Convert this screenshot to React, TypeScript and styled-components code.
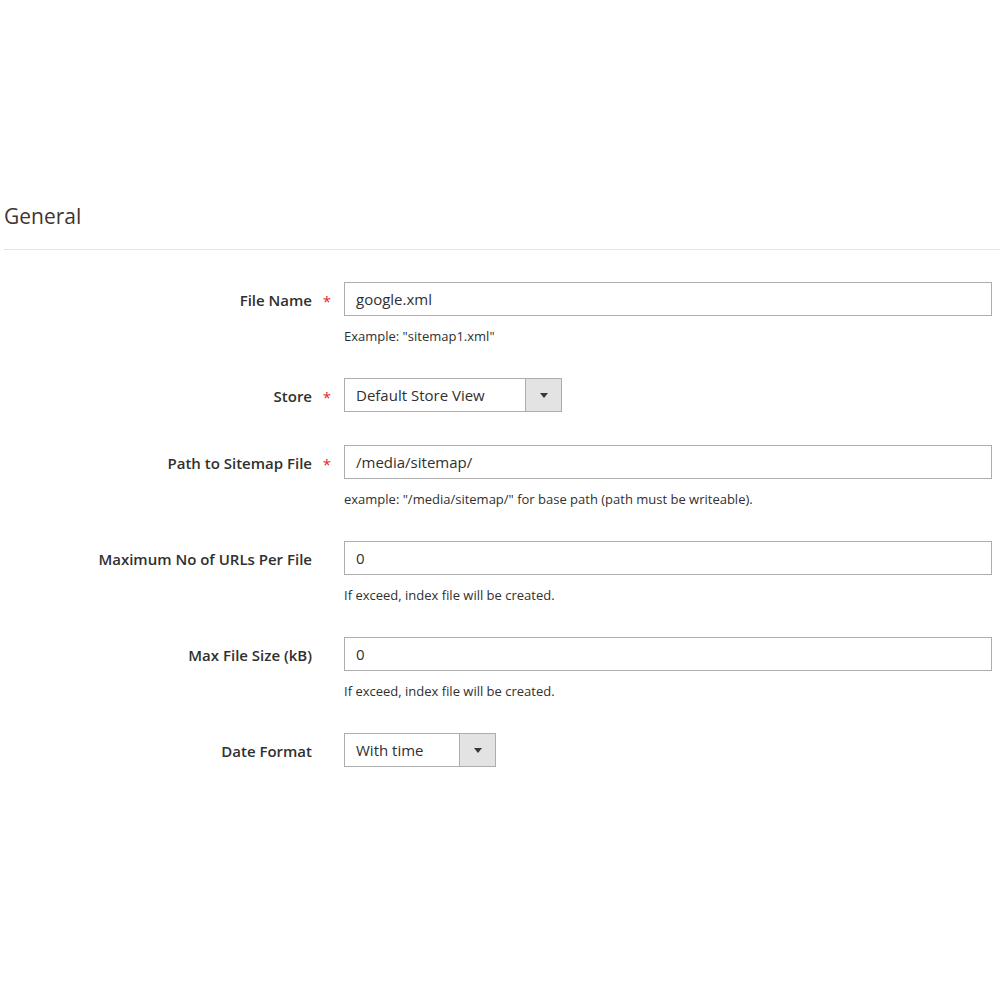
import React from "react";
import styled, { createGlobalStyle } from "styled-components";

const Global = createGlobalStyle`
  html, body { margin: 0; padding: 0; background: #ffffff; }
  body { font-family: "Open Sans", "Liberation Sans", sans-serif; color: #303030; }
`;

const Page = styled.div`
  width: 1000px;
  min-height: 1000px;
  padding-top: 203px;
  box-sizing: border-box;
`;

const Section = styled.section`
  padding-left: 4px;
`;

const Title = styled.h2`
  margin: 0;
  padding: 0 0 20px 0;
  font-size: 21px;
  line-height: 26px;
  font-weight: 400;
  color: #41362f;
  border-bottom: 1px solid #e3e3e3;
`;

const Fields = styled.div`
  display: flex;
  flex-direction: column;
  gap: 33px;
  padding-top: 32px;
`;

const Field = styled.div`
  display: grid;
  grid-template-columns: 308px 32px 648px;
  align-items: start;
`;

const Label = styled.label`
  text-align: right;
  font-size: 15px;
  font-weight: 600;
  color: #303030;
  line-height: 34px;
  padding-top: 1px;
  height: 34px;
  box-sizing: border-box;
  white-space: nowrap;
`;

const Required = styled.span`
  text-align: center;
  color: #e22626;
  font-size: 15px;
  font-weight: 400;
  line-height: 34px;
  height: 34px;
  padding-top: 2px;
  box-sizing: border-box;
  padding-right: 2px;
`;

const Control = styled.div`
  display: flex;
  flex-direction: column;
  align-items: flex-start;
`;

const TextBox = styled.div`
  box-sizing: border-box;
  width: 648px;
  height: 34px;
  border: 1px solid #adadad;
  background: #fff;
  padding: 0 11px;
  font-size: 15px;
  line-height: 32px;
  color: #303030;
`;

const SelectBox = styled.div<{ $width: number }>`
  box-sizing: border-box;
  width: ${(p) => p.$width}px;
  height: 34px;
  border: 1px solid #adadad;
  background: #fff;
  display: flex;
  font-size: 15px;
  color: #303030;
`;

const SelectValue = styled.span`
  flex: 1;
  padding-left: 11px;
  line-height: 32px;
`;

const SelectButton = styled.span`
  width: 35px;
  border-left: 1px solid #adadad;
  background: #e3e3e3;
  display: flex;
  align-items: center;
  justify-content: center;
`;

const Arrow = styled.span`
  width: 0;
  height: 0;
  border-left: 4px solid transparent;
  border-right: 4px solid transparent;
  border-top: 5px solid #41362f;
`;

const Note = styled.div`
  margin-top: 11px;
  font-size: 13px;
  line-height: 18px;
  color: #303030;
`;

type F = {
  label: string;
  required?: boolean;
  value: string;
  note?: string;
  select?: number;
};

const fields: F[] = [
  { label: "File Name", required: true, value: "google.xml", note: 'Example: "sitemap1.xml"' },
  { label: "Store", required: true, value: "Default Store View", select: 218 },
  {
    label: "Path to Sitemap File",
    required: true,
    value: "/media/sitemap/",
    note: 'example: "/media/sitemap/" for base path (path must be writeable).',
  },
  { label: "Maximum No of URLs Per File", value: "0", note: "If exceed, index file will be created." },
  { label: "Max File Size (kB)", value: "0", note: "If exceed, index file will be created." },
  { label: "Date Format", value: "With time", select: 152 },
];

export default function App() {
  return (
    <Page>
      <Global />
      <Section>
        <Title>General</Title>
        <Fields>
          {fields.map((f) => (
            <Field key={f.label}>
              <Label>{f.label}</Label>
              <Required>{f.required ? "*" : ""}</Required>
              <Control>
                {f.select ? (
                  <SelectBox $width={f.select}>
                    <SelectValue>{f.value}</SelectValue>
                    <SelectButton>
                      <Arrow />
                    </SelectButton>
                  </SelectBox>
                ) : (
                  <TextBox>{f.value}</TextBox>
                )}
                {f.note && <Note>{f.note}</Note>}
              </Control>
            </Field>
          ))}
        </Fields>
      </Section>
    </Page>
  );
}
